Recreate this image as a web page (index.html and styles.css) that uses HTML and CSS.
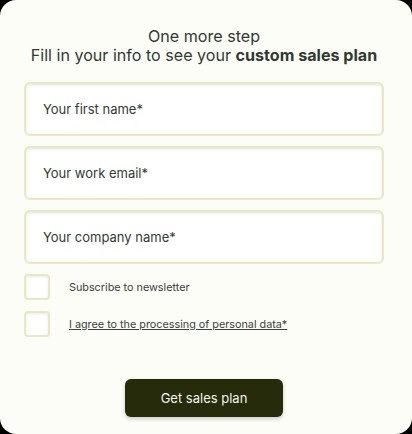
FILE: index.html
```html
<!DOCTYPE html>
<html lang="en">
<head>
  <meta charset="UTF-8">
  <meta name="viewport" content="width=device-width, initial-scale=1.0">
  <title>One more step</title>
  <link rel="stylesheet" href="styles.css">
</head>
<body>
  <div class="card">
    <h1 class="title">One more step<br>Fill in your info to see your <b>custom sales plan</b></h1>
    <form class="form">
      <input class="field" type="text" placeholder="Your first name*">
      <input class="field" type="email" placeholder="Your work email*">
      <input class="field" type="text" placeholder="Your company name*">
      <label class="check">
        <span class="box"></span>
        <span class="check-text">Subscribe to newsletter</span>
      </label>
      <label class="check">
        <span class="box"></span>
        <span class="check-text link">I agree to the processing of personal data*</span>
      </label>
      <button type="button" class="submit">Get sales plan</button>
    </form>
  </div>
</body>
</html>
```
FILE: styles.css
```css
html, body {
  margin: 0;
  padding: 0;
  background: #000;
}
body {
  font-family: Inter, "Noto Sans", sans-serif;
  color: #2c362c;
}
.card {
  width: 412px;
  height: 434px;
  box-sizing: border-box;
  background: #fdfdf8;
  border-radius: 16px;
  padding: 27px 28px 0 24px;
}
.title {
  margin: 0 0 17px;
  font-size: 16.1px;
  font-weight: 400;
  line-height: 19px;
  text-align: center;
  color: #2f3a30;
}
.title b {
  font-weight: 700;
}
.form {
  display: flex;
  flex-direction: column;
}
.field {
  box-sizing: border-box;
  height: 54px;
  margin-bottom: 10px;
  padding: 0 17px;
  border: 2px solid #e6e8c6;
  border-radius: 6px;
  background: #fff;
  box-shadow: inset 0 1px 3px rgba(150, 155, 100, 0.25);
  font-family: inherit;
  font-size: 13px;
  outline: none;
}
.field::placeholder {
  color: #333a33;
}
.check {
  display: flex;
  align-items: center;
  gap: 19px;
  height: 26px;
  margin-bottom: 11px;
}
.box {
  width: 22px;
  height: 22px;
  border: 2px solid #e6e8c6;
  border-radius: 4px;
  background: #fff;
  box-shadow: inset 0 1px 3px rgba(150, 155, 100, 0.2);
}
.check-text {
  font-size: 10.8px;
  color: #3a403a;
}
.link {
  text-decoration: underline;
}
.submit {
  align-self: center;
  margin-top: 31px;
  width: 158px;
  height: 38px;
  border: none;
  border-radius: 6px;
  background: #262b0c;
  box-shadow: 0 2px 4px rgba(0, 0, 0, 0.2);
  color: #f4f4ea;
  font-family: inherit;
  font-size: 13px;
}
```
